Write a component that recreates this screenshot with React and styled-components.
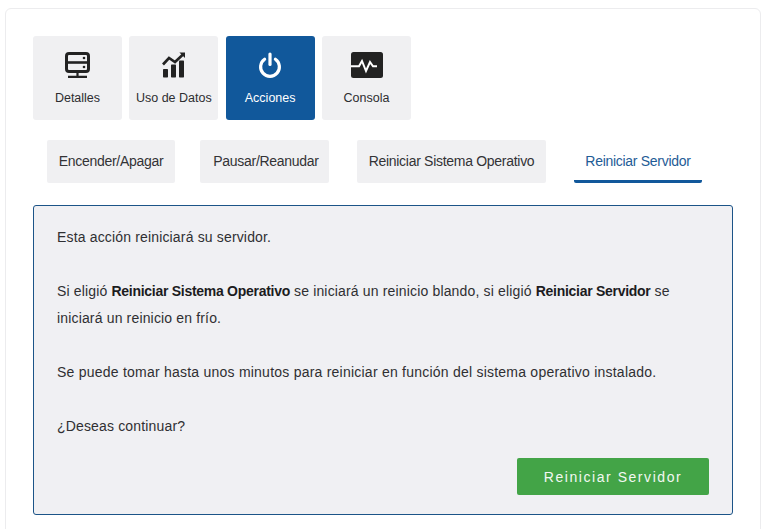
import React from 'react'
import styled, { createGlobalStyle } from 'styled-components'

const GlobalStyle = createGlobalStyle`
  html, body {
    margin: 0;
    padding: 0;
    background: #fff;
    height: 529px;
    overflow: hidden;
  }
  body {
    font-family: "Liberation Sans", Arial, sans-serif;
    color: #2b2b2e;
  }
`

const Page = styled.div`
  padding: 8px 10px 0 5px;
`

const Card = styled.div`
  border: 1px solid #ececee;
  border-radius: 6px;
  padding: 27px 27px 14px 27px;
  height: 540px;
  box-sizing: border-box;
`

const IconTabs = styled.div`
  display: flex;
  gap: 7.33px;
`

const IconTab = styled.div`
  width: 89px;
  height: 84px;
  box-sizing: border-box;
  border-radius: 3px;
  background: ${p => (p.$active ? '#11589b' : '#f0f0f2')};
  display: flex;
  flex-direction: column;
  align-items: center;
  padding-top: 15px;
`

const IconBox = styled.div`
  height: 28px;
  display: flex;
  align-items: center;
  justify-content: center;
`

const TabLabel = styled.span`
  margin-top: 11px;
  font-size: 12.5px;
  line-height: 16px;
  white-space: nowrap;
  color: ${p => (p.$active ? '#fff' : '#2d2d30')};
`

const SubTabs = styled.div`
  display: flex;
  margin: 20px 0 22px 14px;
`

const SubTab = styled.div`
  width: ${p => p.$w}px;
  margin-right: ${p => p.$gap}px;
  height: 43px;
  box-sizing: border-box;
  display: flex;
  align-items: center;
  justify-content: center;
  font-size: 14px;
  letter-spacing: -0.29px;
  white-space: nowrap;
  border-radius: 2px;
  background: ${p => (p.$active ? 'transparent' : '#f0f0f2')};
  color: ${p => (p.$active ? '#1f5c96' : '#333336')};
  border-bottom: ${p => (p.$active ? '3px solid #11589b' : '0')};
  padding-bottom: ${p => (p.$active ? '0' : '2px')};
  padding-top: ${p => (p.$active ? '1px' : '0')};
  padding-left: ${p => p.$shift || 0}px;
`

const Panel = styled.div`
  width: 700px;
  height: 310px;
  box-sizing: border-box;
  background: #f0f0f3;
  border: 1px solid #1c5488;
  border-radius: 3px;
  padding: 18px 23px 0 23px;
  display: flex;
  flex-direction: column;
`

const Para = styled.p`
  margin: 0 0 27px;
  font-size: 14px;
  line-height: 27px;
  color: #2f2f32;
  letter-spacing: ${p => (p.$wide ? '0.23px' : '0.16px')};

  strong {
    font-weight: 700;
    color: #1c1c1e;
    letter-spacing: -0.28px;
  }
`

const Actions = styled.div`
  display: flex;
  justify-content: flex-end;
  margin-top: -9px;
`

const ActionButton = styled.button`
  width: 192px;
  height: 37px;
  border: 0;
  border-radius: 2px;
  background: #43a447;
  color: #f2f8f2;
  font-family: inherit;
  font-size: 14px;
  letter-spacing: 1.55px;
`

const ConsoleSvg = styled.svg`
  margin-left: 1px;
`

const ServerIcon = () => (
  <svg width="25" height="26" viewBox="0 0 25 26" fill="none">
    <rect x="1.5" y="1.5" width="22" height="18" rx="2.5" stroke="#222" strokeWidth="3" />
    <path d="M1.5 10.5h22" stroke="#222" strokeWidth="2.6" />
    <circle cx="19" cy="6" r="1.3" fill="#222" />
    <circle cx="19" cy="15" r="1.3" fill="#222" />
    <path d="M12.5 20v5M3 24.8h19" stroke="#222" strokeWidth="2.2" />
  </svg>
)

const ChartIcon = () => (
  <svg width="24" height="26" viewBox="0 0 24 26" fill="none">
    <path d="M1 12.5 7 6l6 4L21 2.5" stroke="#222" strokeWidth="2.6" />
    <path d="M17.4 0.5H23v5.6z" fill="#222" />
    <rect x="1" y="17" width="5" height="8.5" rx="0.7" fill="#222" />
    <rect x="9" y="12.5" width="5" height="13" rx="0.7" fill="#222" />
    <rect x="17" y="8.5" width="5" height="17" rx="0.7" fill="#222" />
  </svg>
)

const PowerIcon = () => (
  <svg width="24" height="26" viewBox="0 0 24 26" fill="none">
    <path d="M12 2v10.5" stroke="#fff" strokeWidth="3.2" strokeLinecap="round" />
    <path d="M6.6 7.2a9.4 9.4 0 1 0 10.8 0" stroke="#fff" strokeWidth="3.2" strokeLinecap="round" />
  </svg>
)

const PulseIcon = () => (
  <ConsoleSvg width="32" height="26" viewBox="0 0 32 26" fill="none">
    <rect width="32" height="26" rx="2.5" fill="#222" />
    <path d="M0 14.3h8L11 9l4 10 4-9 3 4.3h4" stroke="#fff" strokeWidth="2" />
  </ConsoleSvg>
)

const tabs = [
  { label: 'Detalles', icon: <ServerIcon /> },
  { label: 'Uso de Datos', icon: <ChartIcon /> },
  { label: 'Acciones', icon: <PowerIcon />, active: true },
  { label: 'Consola', icon: <PulseIcon /> },
]

const subTabs = [
  { label: 'Encender/Apagar', w: 128, gap: 25 },
  { label: 'Pausar/Reanudar', w: 129, gap: 28, shift: 3 },
  { label: 'Reiniciar Sistema Operativo', w: 189, gap: 28 },
  { label: 'Reiniciar Servidor', w: 128, gap: 0, active: true },
]

const App = () => (
  <Page>
    <GlobalStyle />
    <Card>
      <IconTabs>
        {tabs.map(t => (
          <IconTab key={t.label} $active={t.active}>
            <IconBox>{t.icon}</IconBox>
            <TabLabel $active={t.active}>{t.label}</TabLabel>
          </IconTab>
        ))}
      </IconTabs>
      <SubTabs>
        {subTabs.map(t => (
          <SubTab key={t.label} $w={t.w} $gap={t.gap} $shift={t.shift} $active={t.active}>
            {t.label}
          </SubTab>
        ))}
      </SubTabs>
      <Panel>
        <Para>Esta acción reiniciará su servidor.</Para>
        <Para>
          Si eligió <strong>Reiniciar Sistema Operativo</strong> se iniciará un reinicio blando, si eligió{' '}
          <strong>Reiniciar Servidor</strong> se iniciará un reinicio en frío.
        </Para>
        <Para $wide>Se puede tomar hasta unos minutos para reiniciar en función del sistema operativo instalado.</Para>
        <Para>¿Deseas continuar?</Para>
        <Actions>
          <ActionButton>Reiniciar Servidor</ActionButton>
        </Actions>
      </Panel>
    </Card>
  </Page>
)

export default App
